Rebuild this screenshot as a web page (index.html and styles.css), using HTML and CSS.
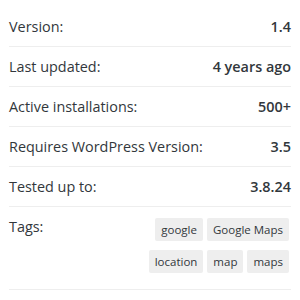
FILE: index.html
```html
<!DOCTYPE html>
<html lang="en">
<head>
    <meta charset="UTF-8">
    <meta name="viewport" content="width=device-width, initial-scale=1.0">
    <title>Plugin Meta</title>
    <link rel="stylesheet" href="styles.css">
</head>
<body>
    <!-- Plugin meta list -->
    <ul class="plugin-meta">
        <li>Version: <strong>1.4</strong></li>
        <li>Last updated: <strong>4 years ago</strong></li>
        <li>Active installations: <strong>500+</strong></li>
        <li>Requires WordPress Version: <strong>3.5</strong></li>
        <li>Tested up to: <strong>3.8.24</strong></li>
        <li class="tags-row">
            <span class="tags-label">Tags:</span>
            <div class="tags">
                <a href="#">google</a>
                <a href="#">Google Maps</a>
                <a href="#">location</a>
                <a href="#">map</a>
                <a href="#">maps</a>
            </div>
        </li>
    </ul>
</body>
</html>
```

FILE: styles.css
```css
/* Basic Reset */
body, html {
    margin: 0;
    padding: 0;
    background: #fff;
    font-family: "Open Sans", sans-serif;
    color: #32373c;
}

/* Meta list */
.plugin-meta {
    list-style: none;
    margin: 7px 9px 0 9px;
    padding: 0;
    font-size: 14.4px;
    line-height: 21px;
}

.plugin-meta li {
    display: flex;
    justify-content: space-between;
    padding: 9px 0;
    border-bottom: 1px solid #eee;
}

.plugin-meta strong {
    font-weight: 600;
}

/* Tags */
.tags-row {
    align-items: flex-start;
}

.tags {
    display: flex;
    flex-wrap: wrap;
    justify-content: flex-end;
    max-width: 170px;
    margin-right: 2px;
}

.tags a {
    display: block;
    margin: 2px 0 7px 4px;
    padding: 0 6px;
    background: #eee;
    border-radius: 2px;
    color: #32373c;
    font-size: 11.5px;
    line-height: 23px;
    text-decoration: none;
}
```
